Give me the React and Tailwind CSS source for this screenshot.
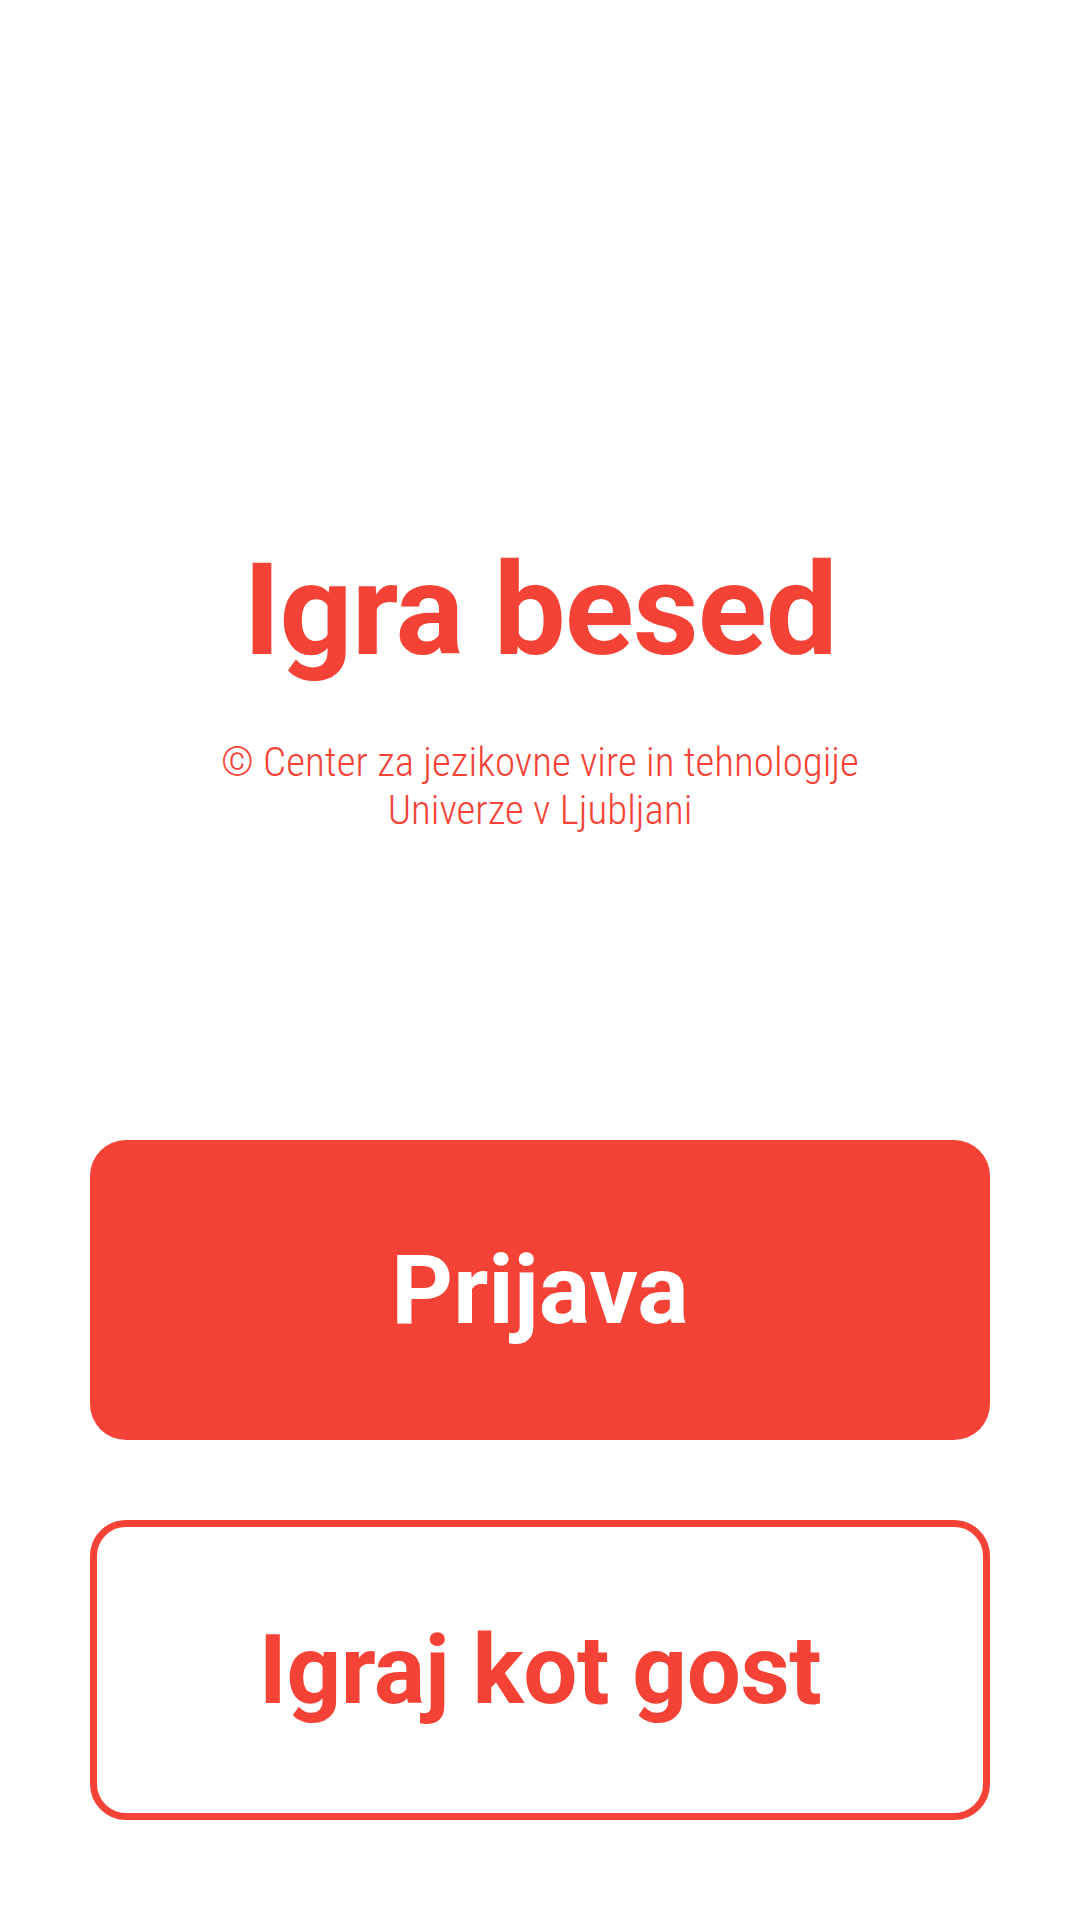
import React from 'react';

// Start screen of the word game
const App = () => {
  const handleLogin = () => {};
  const handleGuest = () => {};

  return (
    <div className="min-h-[1920px] w-[1080px] bg-white flex flex-col items-center pt-[546px] font-['Roboto','Liberation_Sans',sans-serif]">
      {/* Title */}
      <h1 className="text-[128px] leading-none font-bold text-[#f44336] tracking-[-1px]">
        Igra besed
      </h1>

      {/* Copyright */}
      <p className="mt-[64px] text-[41px] leading-[48px] font-light text-center text-[#f44336] font-['Roboto_Condensed','Liberation_Sans_Narrow',sans-serif]">
        © Center za jezikovne vire in tehnologije
        <br />
        Univerze v Ljubljani
      </p>

      {/* Buttons */}
      <div className="mt-[306px] w-full px-[90px] flex flex-col gap-[80px]">
        <button
          onClick={handleLogin}
          className="h-[300px] w-full rounded-[36px] bg-[#f44336] text-white text-[96px] leading-none font-bold flex items-center justify-center"
        >
          Prijava
        </button>
        <button
          onClick={handleGuest}
          className="h-[300px] w-full rounded-[36px] border-[7px] border-[#f44336] bg-white text-[#f44336] text-[96px] leading-none font-bold tracking-[-0.5px] flex items-center justify-center"
        >
          Igraj kot gost
        </button>
      </div>
    </div>
  );
};

export default App;
